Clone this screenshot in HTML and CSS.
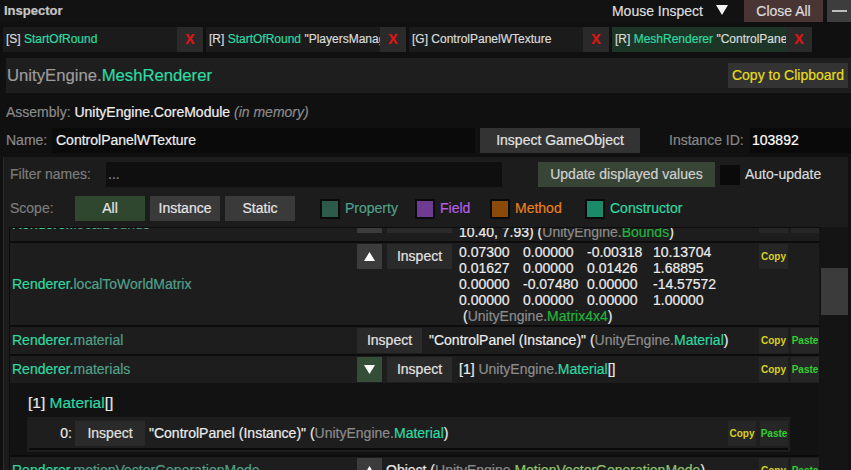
FILE: index.html
```html
<!DOCTYPE html>
<html>
<head>
<meta charset="utf-8">
<title>Inspector</title>
<link rel="stylesheet" href="styles.css">
</head>
<body>
<div class="window">
  <div class="titlebar">
    <span class="title">Inspector</span>
    <span class="mouse-label">Mouse Inspect</span>
    <svg class="mouse-arrow" width="12" height="10" viewBox="0 0 12 10"><polygon points="0,0 12,0 6,10" fill="#f2f2f2"/></svg>
    <div class="btn close-all">Close All</div>
    <div class="btn minimize"><span class="dash"></span></div>
  </div>

  <div class="tabs">
    <div class="tab"><div class="tab-label">[S] <span class="cls">StartOfRound</span></div><div class="tab-x">X</div></div>
    <div class="tab"><div class="tab-label">[R] <span class="cls">StartOfRound</span> "PlayersManager"</div><div class="tab-x">X</div></div>
    <div class="tab"><div class="tab-label">[G] ControlPanelWTexture</div><div class="tab-x">X</div></div>
    <div class="tab active"><div class="tab-label">[R] <span class="cls">MeshRenderer</span> "ControlPanelWTexture"</div><div class="tab-x">X</div></div>
  </div>

  <div class="header">
    <div class="header-title"><span class="ns-light">UnityEngine.</span><span class="cls">MeshRenderer</span></div>
    <div class="btn btn-clip">Copy to Clipboard</div>
  </div>

  <div class="assembly-row">
    <span class="grey">Assembly:</span>&nbsp;<span class="white">UnityEngine.CoreModule</span>&nbsp;<span class="grey italic">(in memory)</span>
  </div>

  <div class="name-row">
    <span class="name-label">Name:</span>
    <div class="name-field">ControlPanelWTexture</div>
    <div class="btn btn-go">Inspect GameObject</div>
    <span class="id-label">Instance ID:</span>
    <div class="id-field">103892</div>
  </div>

  <div class="panel">
    <div class="filter-row">
      <span class="filter-label">Filter names:</span>
      <div class="filter-input">...</div>
      <div class="btn btn-update">Update displayed values</div>
      <div class="checkbox"></div>
      <span class="auto-label">Auto-update</span>
    </div>

    <div class="scope-row">
      <span class="scope-label">Scope:</span>
      <div class="btn scope-btn on">All</div>
      <div class="btn scope-btn">Instance</div>
      <div class="btn scope-btn">Static</div>
      <div class="legend">
        <div class="legend-item w95"><span class="swatch sw-prop"></span><span class="lg-prop">Property</span></div>
        <div class="legend-item w75"><span class="swatch sw-field"></span><span class="lg-field">Field</span></div>
        <div class="legend-item w95"><span class="swatch sw-method"></span><span class="lg-method">Method</span></div>
        <div class="legend-item"><span class="swatch sw-ctor"></span><span class="cls">Constructor</span></div>
      </div>
    </div>

    <div class="list-wrap">
      <div class="list">
        <div class="list-inner">

          <div class="row first">
            <div class="m-name"><span class="cls">Renderer.</span><span class="prop">localBounds</span></div>
            <div class="ctrls">
              <div class="btn b-arrow"><svg width="11" height="9" viewBox="0 0 11 9"><polygon points="5.5,0 11,9 0,9" fill="#fff"/></svg></div>
              <div class="btn b-inspect">Inspect</div>
            </div>
            <div class="val multi">Center: (0.00, 1.53, -2.15), Extents: (8.20,<br>10.40, 7.93) (<span class="ns">UnityEngine.</span><span class="struct">Bounds</span>)</div>
            <div class="cp"><div class="btn b-copy">Copy</div><div class="btn b-paste">Paste</div></div>
          </div>

          <div class="row">
            <div class="m-name"><span class="cls">Renderer.</span><span class="prop">localToWorldMatrix</span></div>
            <div class="ctrls">
              <div class="btn b-arrow"><svg width="11" height="9" viewBox="0 0 11 9"><polygon points="5.5,0 11,9 0,9" fill="#fff"/></svg></div>
              <div class="btn b-inspect">Inspect</div>
            </div>
            <div class="val multi">
              <div class="mat"><span>0.07300</span><span>0.00000</span><span>-0.00318</span><span>10.13704</span></div>
              <div class="mat"><span>0.01627</span><span>0.00000</span><span>0.01426</span><span>1.68895</span></div>
              <div class="mat"><span>0.00000</span><span>-0.07480</span><span>0.00000</span><span>-14.57572</span></div>
              <div class="mat"><span>0.00000</span><span>0.00000</span><span>0.00000</span><span>1.00000</span></div>
              <div class="mat-type">(<span class="ns">UnityEngine.</span><span class="struct">Matrix4x4</span>)</div>
            </div>
            <div class="cp"><div class="btn b-copy">Copy</div></div>
          </div>

          <div class="row">
            <div class="m-name"><span class="cls">Renderer.</span><span class="prop">material</span></div>
            <div class="ctrls">
              <div class="btn b-inspect">Inspect</div>
            </div>
            <div class="val">"ControlPanel (Instance)" (<span class="ns">UnityEngine.</span><span class="cls">Material</span>)</div>
            <div class="cp"><div class="btn b-copy">Copy</div><div class="btn b-paste">Paste</div></div>
          </div>

          <div class="row group">
            <div class="row-main">
              <div class="m-name"><span class="cls">Renderer.</span><span class="prop">materials</span></div>
              <div class="ctrls">
                <div class="btn b-arrow open"><svg width="11" height="9" viewBox="0 0 11 9"><polygon points="0,0 11,0 5.5,9" fill="#fff"/></svg></div>
                <div class="btn b-inspect">Inspect</div>
              </div>
              <div class="val">[1] <span class="ns">UnityEngine.</span><span class="cls">Material</span>[]</div>
              <div class="cp"><div class="btn b-copy">Copy</div><div class="btn b-paste">Paste</div></div>
            </div>
            <div class="expanded">
              <div class="exp-title">[1] <span class="cls">Material</span>[]</div>
              <div class="sub">
                <div class="sub-row">
                  <span class="idx">0:</span>
                  <div class="btn b-inspect wide">Inspect</div>
                  <div class="val">"ControlPanel (Instance)" (<span class="ns">UnityEngine.</span><span class="cls">Material</span>)</div>
                  <div class="cp wide-gap"><div class="btn b-copy">Copy</div><div class="btn b-paste">Paste</div></div>
                </div>
              </div>
            </div>
          </div>

          <div class="row">
            <div class="m-name"><span class="cls">Renderer.</span><span class="prop">motionVectorGenerationMode</span></div>
            <div class="ctrls">
              <div class="btn b-arrow"><svg width="11" height="9" viewBox="0 0 11 9"><polygon points="5.5,0 11,9 0,9" fill="#fff"/></svg></div>
            </div>
            <div class="val near">Object (<span class="ns">UnityEngine.</span><span class="enum">MotionVectorGenerationMode</span>)</div>
            <div class="cp"><div class="btn b-copy">Copy</div><div class="btn b-paste">Paste</div></div>
          </div>

        </div>
      </div>
      <div class="scrollbar"><div class="thumb"></div></div>
    </div>
  </div>
</div>
</body>
</html>
```

FILE: styles.css
```css
* { box-sizing: border-box; }
html, body { margin: 0; padding: 0; }
body {
  width: 851px;
  height: 470px;
  overflow: hidden;
  background: #101010;
  color: #e4e4e4;
  font-family: "Liberation Sans", Arial, sans-serif;
  font-size: 14px;
  line-height: 1.2;
  -webkit-text-stroke: 0.2px currentColor;
}
.window { display: flex; flex-direction: column; height: 470px; }

.btn { display: flex; align-items: center; justify-content: center; white-space: nowrap; flex: none; }

/* colours */
.cls { color: #2ed9a2; }
.ns { color: #8c8c8c; }
.ns-light { color: #9c9c9c; }
.prop { color: #52a08a; }
.struct { color: #22b43e; }
.enum { color: #92c470; }
.grey { color: #8a8a8a; }
.white { color: #f0f0f0; }
.italic { font-style: italic; }

/* title bar */
.titlebar { display: flex; align-items: center; height: 22px; background: #121212; flex: none; }
.title { flex: 1; padding-left: 4px; font-size: 13px; font-weight: bold; color: #c6c6c6; }
.mouse-label { color: #dedede; }
.mouse-arrow { margin: 0 16px 3px 13px; flex: none; }
.close-all { width: 79px; height: 22px; background: #4a3535; color: #dcdcdc; }
.minimize { width: 24px; height: 22px; margin-left: 4px; background: #3d3d3d; }
.dash { width: 15px; height: 2px; background: #bdbdbd; margin-left: 1px; }

/* tabs */
.tabs { display: flex; gap: 3px; padding: 5px 0 0 3px; height: 30px; flex: none; }
.tab { display: flex; width: 200px; height: 25px; }
.tab-label {
  width: 174px;
  background: #1b1b1b;
  padding-left: 3px;
  font-size: 12px;
  line-height: 25px;
  white-space: nowrap;
  overflow: hidden;
  color: #dadada;
}
.tab-x {
  width: 26px;
  background: #2a2a2a;
  color: #e01414;
  font-weight: bold;
  font-size: 14px;
  display: flex;
  align-items: center;
  justify-content: center;
}
.tab.active .tab-label { background: #1d3526; }

/* header */
.header {
  display: flex;
  align-items: center;
  justify-content: space-between;
  height: 35px;
  margin: 6px 0 0 6px;
  background: #1e1e1e;
  padding: 0 3px 0 1px;
  flex: none;
}
.header-title { font-size: 16.7px; padding-top: 2px; }
.btn-clip { width: 120px; height: 25px; background: #333333; color: #e6dc1c; }

.assembly-row { display: flex; align-items: center; height: 35px; padding: 3px 0 0 6px; flex: none; }

.name-row { display: flex; align-items: center; height: 25px; padding-left: 6px; flex: none; }
.name-label { width: 46px; color: #8a8a8a; }
.name-field { width: 423px; height: 25px; background: #0a0a0a; padding-left: 4px; display: flex; align-items: center; color: #eeeeee; }
.btn-go { width: 160px; height: 25px; margin-left: 5px; background: #333333; color: #e2e2e2; }
.id-label { margin-left: 29px; width: 81px; color: #888888; }
.id-field { flex: 1; height: 25px; background: #090909; padding-left: 2px; color: #ffffff; display: flex; align-items: center; }

/* panel */
.panel {
  flex: 1;
  min-height: 0;
  display: flex;
  flex-direction: column;
  margin: 4px 3px 0 3px;
  border-left: 1px solid #2c2c2c;
  background: #1c1c1c;
  padding: 5px 0 0 5px;
}
.filter-row { display: flex; align-items: center; height: 25px; padding-left: 1px; flex: none; }
.filter-label { width: 96px; color: #7c7c7c; }
.filter-input { width: 396px; height: 25px; background: #0f0f0f; color: #8a8a8a; padding-left: 2px; display: flex; align-items: center; }
.btn-update { width: 177px; height: 25px; margin-left: 36px; background: #384536; color: #d0d0d0; }
.checkbox { width: 20px; height: 20px; margin-left: 5px; background: #0a0a0a; flex: none; }
.auto-label { margin-left: 5px; color: #dadada; }

.scope-row { display: flex; align-items: center; height: 25px; margin-top: 9px; padding-left: 1px; flex: none; }
.scope-label { width: 65px; color: #7c7c7c; }
.scope-btn { width: 70px; height: 25px; margin-right: 5px; background: #3a3a3a; color: #e4e4e4; }
.scope-btn.on { background: #2e472e; }
.legend { display: flex; align-items: center; margin-left: 20px; }
.legend-item { display: flex; align-items: center; flex: none; }
.w95 { width: 95px; }
.w75 { width: 75px; }
.swatch { width: 20px; height: 20px; border: 2px solid #0a0a0a; margin-right: 5px; flex: none; }
.sw-prop { background: #2c5a4b; }
.sw-field { background: #6e3a92; }
.sw-method { background: #8a4a0a; }
.sw-ctor { background: #1b8a68; }
.lg-prop { color: #4fa08a; }
.lg-field { color: #b55ee6; }
.lg-method { color: #ea7f1c; }

/* member list */
.list-wrap { flex: 1; min-height: 0; display: flex; margin-top: 6px; }
.list {
  flex: 1;
  overflow: hidden;
  border-top: 1px solid #0c0c0c;
  border-left: 1px solid #0c0c0c;
  background: #1d1d1d;
}
.list-inner { margin-top: -21px; }
.scrollbar { width: 29px; padding: 41px 0 0 2px; background: #141414; flex: none; }
.thumb { height: 47px; background: #3b3b3b; }

.row { display: flex; align-items: flex-start; border-top: 2px solid #0c0c0c; padding: 1px 0; }
.row.first { border-top: 0; }
.row.group { display: block; padding: 0; }
.row-main { display: flex; align-items: flex-start; padding: 1px 0; }

.m-name { width: 347px; padding-left: 2px; align-self: center; white-space: nowrap; overflow: hidden; flex: none; }
.ctrls { display: flex; gap: 5px; flex: none; }
.b-arrow { width: 25px; height: 25px; background: #3c3c3c; }
.b-arrow.open { background: #344e37; }
.b-inspect { width: 65px; height: 25px; background: #2a2a2a; color: #e2e2e2; }
.b-inspect.wide { width: 70px; }
.val { flex: 1; min-width: 0; margin-left: 7px; align-self: center; white-space: nowrap; overflow: hidden; color: #ececec; }
.val.near { margin-left: 4px; }
.val.multi { align-self: flex-start; line-height: 16px; }
.mat { display: grid; grid-template-columns: 64px 64px 66px auto; }
.mat-type { padding-left: 4px; }

.cp { display: flex; gap: 3px; width: 60px; flex: none; }
.cp.wide-gap { gap: 4px; }
.b-copy { width: 29px; height: 25px; background: #262626; color: #d6d21c; font-size: 10px; font-weight: bold; -webkit-text-stroke: 0; }
.b-paste { width: 28px; height: 25px; background: #262626; color: #2fd12f; font-size: 10px; font-weight: bold; -webkit-text-stroke: 0; }
.wide-gap .b-copy { width: 28px; }

/* expanded list */
.expanded { background: #121212; padding: 10px 29px 3px 17px; }
.exp-title { font-size: 15.5px; line-height: 20px; padding-left: 1px; color: #e8e8e8; }
.sub { margin-top: 4px; background: #1e1e1e; padding: 0 2px 2px; }
.sub-row { display: flex; align-items: center; padding: 4px 0 2px; border-bottom: 2px solid #0a0a0a; }
.idx { width: 46px; text-align: right; padding-right: 3px; flex: none; color: #e8e8e8; }
.sub-row .val { margin-left: 4px; }
```
